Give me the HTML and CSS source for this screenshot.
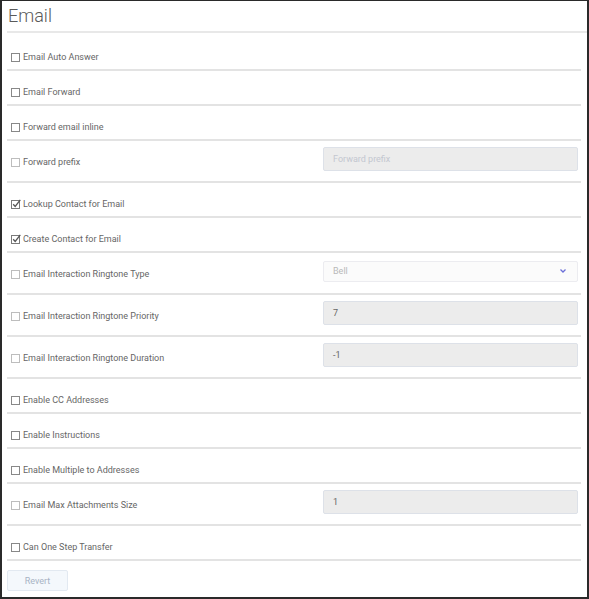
FILE: index.html
```html
<!DOCTYPE html>
<html>
<head>
<meta charset="utf-8">
<link rel="stylesheet" href="styles.css">
</head>
<body>
<div class="panel">
  <div class="header"><h1 class="title">Email</h1></div>
  <div class="list">
    <div class="row first">
      <label class="check"><span class="box"></span>Email Auto Answer</label>
    </div>
    <div class="row">
      <label class="check"><span class="box"></span>Email Forward</label>
    </div>
    <div class="row">
      <label class="check"><span class="box"></span>Forward email inline</label>
    </div>
    <div class="row with-input">
      <label class="check"><span class="box light"></span>Forward prefix</label>
      <div class="control"><div class="input placeholder">Forward prefix</div></div>
    </div>
    <div class="row">
      <label class="check"><svg class="tick" width="10" height="10" viewBox="0 0 10 10"><rect x="0.5" y="1.5" width="8" height="8" fill="#fff" stroke="#7a7a7a" stroke-width="1"/><path d="M2.2 5.2 L4.2 7.4 L9.3 0.9" fill="none" stroke="#555" stroke-width="1.3"/></svg>Lookup Contact for Email</label>
    </div>
    <div class="row">
      <label class="check"><svg class="tick" width="10" height="10" viewBox="0 0 10 10"><rect x="0.5" y="1.5" width="8" height="8" fill="#fff" stroke="#7a7a7a" stroke-width="1"/><path d="M2.2 5.2 L4.2 7.4 L9.3 0.9" fill="none" stroke="#555" stroke-width="1.3"/></svg>Create Contact for Email</label>
    </div>
    <div class="row with-input">
      <label class="check"><span class="box light"></span>Email Interaction Ringtone Type</label>
      <div class="control"><div class="select"><span>Bell</span><svg width="6" height="4" viewBox="0 0 6 4"><path d="M0.5 0.5 L3 3 L5.5 0.5" fill="none" stroke="#6b6fd8" stroke-width="1.3"/></svg></div></div>
    </div>
    <div class="row with-input">
      <label class="check"><span class="box light"></span>Email Interaction Ringtone Priority</label>
      <div class="control"><div class="input">7</div></div>
    </div>
    <div class="row with-input">
      <label class="check"><span class="box light"></span>Email Interaction Ringtone Duration</label>
      <div class="control"><div class="input">-1</div></div>
    </div>
    <div class="row">
      <label class="check"><span class="box"></span>Enable CC Addresses</label>
    </div>
    <div class="row">
      <label class="check"><span class="box"></span>Enable Instructions</label>
    </div>
    <div class="row">
      <label class="check"><span class="box"></span>Enable Multiple to Addresses</label>
    </div>
    <div class="row with-input">
      <label class="check"><span class="box light"></span>Email Max Attachments Size</label>
      <div class="control"><div class="input">1</div></div>
    </div>
    <div class="row">
      <label class="check"><span class="box"></span>Can One Step Transfer</label>
    </div>
  </div>
  <button class="revert">Revert</button>
</div>
</body>
</html>
```
FILE: styles.css
```css
html, body {
  margin: 0;
  padding: 0;
  background: #fff;
}
body {
  font-family: Roboto, "Liberation Sans", Arial, sans-serif;
}
.panel {
  box-sizing: border-box;
  width: 589px;
  height: 599px;
  border-style: solid;
  border-color: #2a2a2a;
  border-width: 1px 2px 2px 2px;
  padding-left: 5px;
  overflow: hidden;
}
.header {
  height: 30px;
  border-bottom: 2px solid #e8e8e8;
}
.title {
  margin: 0;
  padding: 3px 0 0 1px;
  font-size: 18px;
  font-weight: 300;
  line-height: 24px;
  color: #5a5a5a;
}
.list {
  margin-right: 6px;
}
.row {
  display: flex;
  align-items: center;
  padding: 14px 3px 5px 4px;
  border-bottom: 2px solid #e3e3e3;
}
.row.first {
  margin-top: 3px;
}
.row.with-input {
  padding: 6px 3px 10px 4px;
}
.check {
  flex: 1;
  display: flex;
  align-items: center;
  gap: 3px;
  font-size: 9px;
  line-height: 14px;
  color: #666;
}
.with-input .check {
  padding-top: 6px;
}
.box {
  box-sizing: border-box;
  width: 9px;
  height: 9px;
  border: 1px solid #888;
  background: #fff;
  margin-top: 1px;
}
.box.light {
  border-color: #bdbdbd;
}
.tick {
  display: block;
  margin-top: -1px;
  margin-right: -1px;
}
.control {
  width: 255px;
  height: 24px;
  display: flex;
  align-items: center;
}
.input {
  box-sizing: border-box;
  width: 100%;
  height: 24px;
  background: #ececec;
  border: 1px solid #dde1e8;
  border-radius: 2px;
  padding-left: 9px;
  font-size: 9px;
  line-height: 22px;
  color: #666;
}
.input.placeholder {
  color: #c3c7d0;
}
.select {
  box-sizing: border-box;
  width: 100%;
  height: 21px;
  background: #fbfbfb;
  border: 1px solid #ececf0;
  border-radius: 2px;
  padding: 0 11px 0 9px;
  display: flex;
  align-items: center;
  justify-content: space-between;
  font-size: 9px;
  color: #b9b9b9;
}
.select svg {
  display: block;
}
.revert {
  display: block;
  margin-top: 9px;
  width: 61px;
  height: 21px;
  padding: 0;
  background: #f4f8fc;
  border: 1px solid #e2e9f1;
  border-radius: 2px;
  font-family: Roboto, "Liberation Sans", Arial, sans-serif;
  font-size: 9px;
  color: #a8b3c4;
}
```
